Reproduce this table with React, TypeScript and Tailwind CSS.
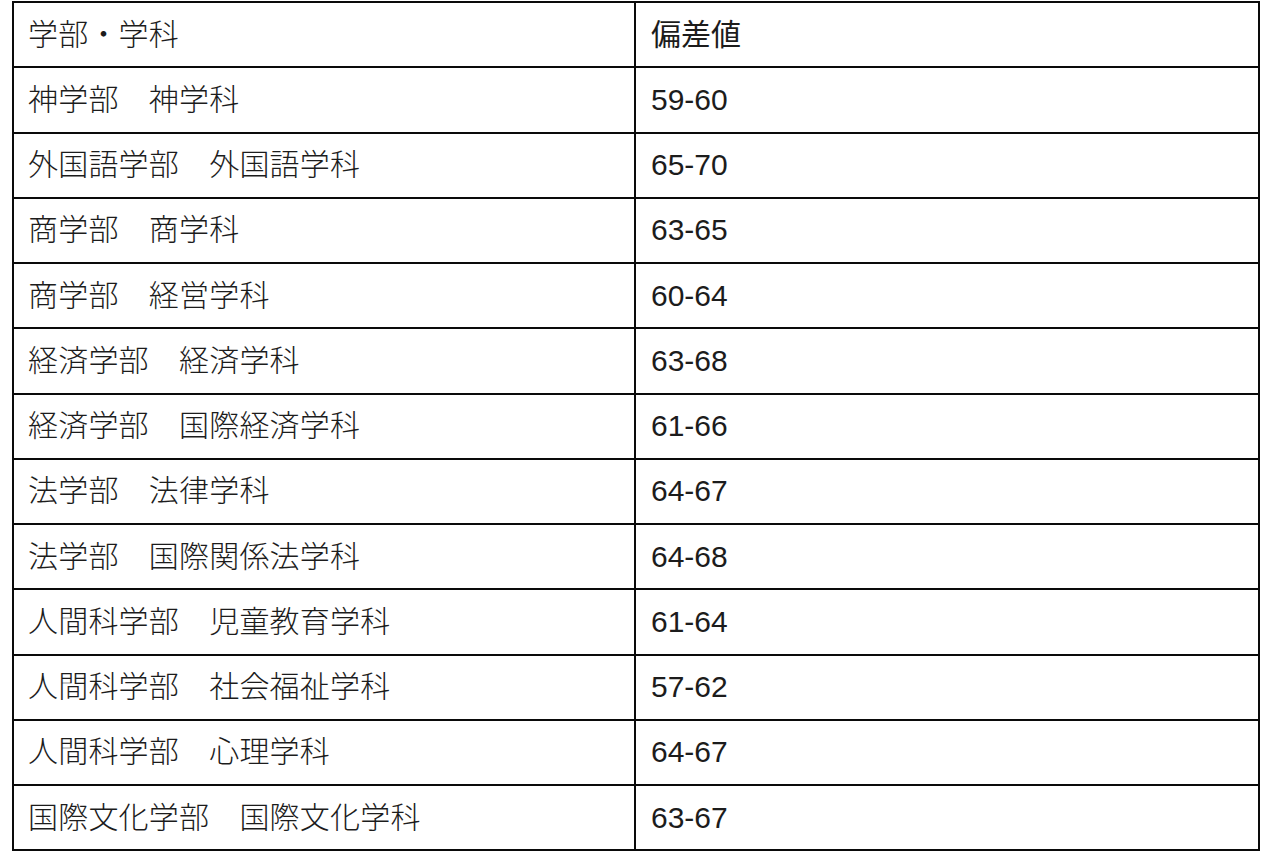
import React from "react";

const rows: [string, string][] = [
  ["学部・学科", "偏差値"],
  ["神学部　神学科", "59-60"],
  ["外国語学部　外国語学科", "65-70"],
  ["商学部　商学科", "63-65"],
  ["商学部　経営学科", "60-64"],
  ["経済学部　経済学科", "63-68"],
  ["経済学部　国際経済学科", "61-66"],
  ["法学部　法律学科", "64-67"],
  ["法学部　国際関係法学科", "64-68"],
  ["人間科学部　児童教育学科", "61-64"],
  ["人間科学部　社会福祉学科", "57-62"],
  ["人間科学部　心理学科", "64-67"],
  ["国際文化学部　国際文化学科", "63-67"],
];

export default function App() {
  return (
    <div className="w-[1280px] h-[855px] bg-white overflow-hidden">
      <div
        className="ml-[12px] mt-[1px] w-[1248px] border-t-2 border-l-2 border-r-2 border-[#0a0a0a] text-[30px] text-[#1c1c1c]"
        style={{ fontFamily: '"Liberation Sans", "Noto Sans CJK JP", sans-serif' }}
      >
        {rows.map(([a, b], i) => (
          <div key={i} className="flex h-[65.25px] border-b-2 border-[#0a0a0a]">
            <div className="w-[622px] flex items-center pl-[14px] border-r-2 border-[#0a0a0a] leading-none font-light tracking-[0.2px]">
              {a}
            </div>
            <div className="flex-1 flex items-center pl-[15px] leading-none">{b}</div>
          </div>
        ))}
      </div>
    </div>
  );
}
